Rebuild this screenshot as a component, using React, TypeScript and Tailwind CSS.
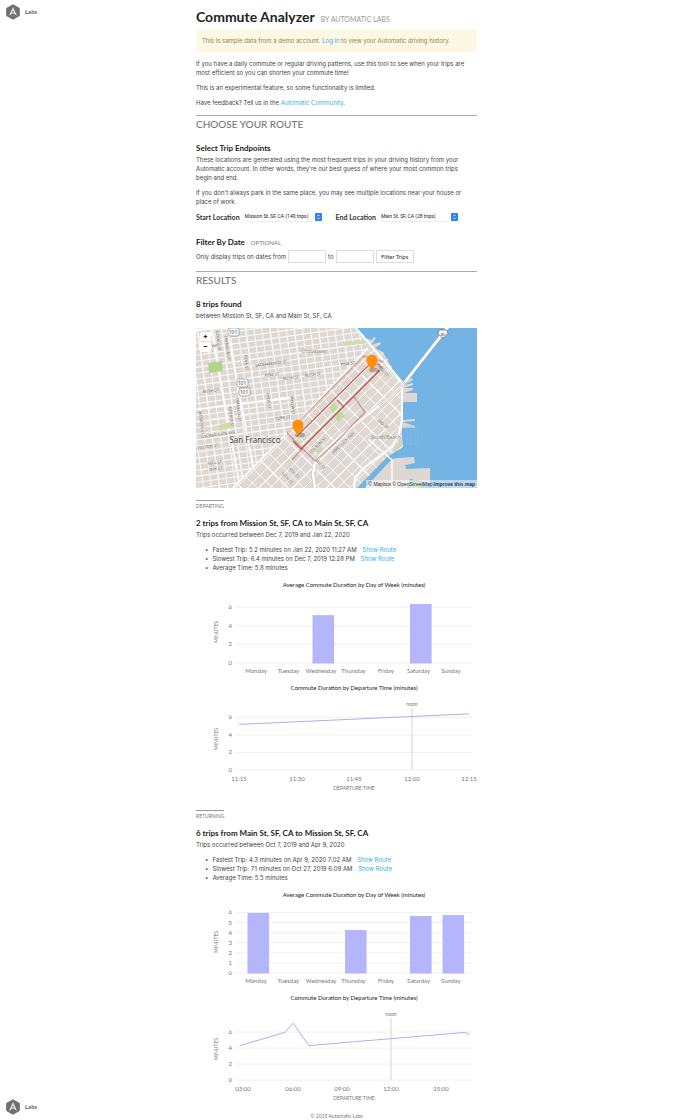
import React from 'react';

const BODY = 'font-[Inter,sans-serif] text-[6px] leading-[9px]';

const BULLET = "before:mr-1 before:content-['•']";

const DAYS = ['Monday', 'Tuesday', 'Wednesday', 'Thursday', 'Friday', 'Saturday', 'Sunday'];

const LabsLogo: React.FC = () => (
  <a href="#" className="flex items-center gap-1 text-[6px] leading-4 font-bold text-[#666]">
    <svg viewBox="0 0 16 16" className="size-4" aria-hidden="true">
      <path d="M8 .8 14.3 4.3V11.7L8 15.2 1.7 11.7V4.3Z" fill="#6f7171" stroke="#6f7171" strokeLinejoin="round" />
      <path d="M8 3 12 11.7 8 9.3 4 11.7Z" fill="#e4e4e4" />
      <path d="M8 6.3 9.2 8.9 8 8.2 6.8 8.9Z" fill="#6f7171" />
    </svg>
    Labs
  </a>
);

interface SectionHeadingProps {
  children: React.ReactNode;
}

const SectionHeading: React.FC<SectionHeadingProps> = ({ children }) => (
  <h2 className="mt-2 border-t border-[#aaa] font-[Lato,sans-serif] text-[10px] leading-[17px] font-medium text-[#777] uppercase">
    {children}
  </h2>
);

interface LocationSelectProps {
  id: string;
  label: string;
  value: string;
}

const LocationSelect: React.FC<LocationSelectProps> = ({ id, label, value }) => (
  <div className="flex items-center gap-1">
    <label htmlFor={id} className="font-[Lato,sans-serif] text-[7px] leading-[10px] font-bold text-[#333]">
      {label}
    </label>
    <div className="relative w-[78px]">
      <select
        id={id}
        className="block h-[10px] w-full appearance-none rounded-sm border-b border-[#eee] bg-white pl-px font-[Roboto,sans-serif] text-[5px] leading-[9px] text-[#222]"
      >
        <option>{value}</option>
      </select>
      <svg viewBox="0 0 7 8" className="pointer-events-none absolute top-px right-0 h-2 w-[7px]" aria-hidden="true">
        <rect width="7" height="8" rx="1" fill="#2f7df0" />
        <path d="M2.2 3.2 3.5 1.8 4.8 3.2M2.2 4.8 3.5 6.2 4.8 4.8" fill="none" stroke="#fff" strokeWidth=".7" />
      </svg>
    </div>
  </div>
);

/* Streets of the map, drawn unrotated and turned as one group */
interface GridProps {
  angle: number;
  stepX: number;
  stepY: number;
}

const range = (from: number, to: number, step: number) =>
  Array.from({ length: Math.floor((to - from) / step) + 1 }, (_, i) => from + i * step);

const StreetGrid: React.FC<GridProps> = ({ angle, stepX, stepY }) => (
  <g transform={`rotate(${angle} 100 100)`} stroke="#fff">
    {range(-80, 300, stepX).map((x, i) => (
      <path key={`v${x}`} d={`M${x} -120V320`} strokeWidth={i % 3 === 0 ? 1.2 : 0.8} />
    ))}
    {range(-100, 300, stepY).map((y, i) => (
      <path key={`h${y}`} d={`M-80 ${y}H320`} strokeWidth={i % 3 === 0 ? 1.1 : 0.8} />
    ))}
  </g>
);

const STREETS: [string, number, number, number][] = [
  ['SACRAMENTO ST', 75, 37, -7],
  ['PINE ST', 76, 48, -5],
  ['BUSH ST', 95, 51, -6],
  ['BUSH ST', 117, 48, -6],
  ['BUSH ST', 15, 64, -8],
  ['PINE ST', 152, 37, -8],
  ['TURK ST', 87, 91, -5],
  ['GOLDEN GATE AVE', 22, 108, -8],
  ['FULTON ST', 12, 120, -8],
  ['FELL ST', 19, 136, -8],
  ['OAK ST', 20, 142, -8],
  ['WAY', 20, 19, -8],
  ['GOUGH ST', 21, 13, 82],
  ['FRANKLIN ST', 30, 20, 82],
  ['POLK ST', 49, 35, 84],
  ['FRANKLIN ST', 41, 82, 84],
  ['GOUGH ST', 34, 89, 84],
  ['HYDE ST', 71, 73, 84],
  ['TAYLOR ST', 95, 77, 84],
  ['WEBSTER ST', 4, 95, 84],
  ['FOLSOM ST', 123, 118, -45],
  ['JAMES LICK FWY', 148, 116, -43],
  ['8TH ST', 123, 137, 45],
  ['9TH ST', 97, 146, 45],
  ['10TH ST', 90, 151, 45],
  ['MAIN ST', 185, 43, 45],
  ['3RD ST', 186, 97, 40],
];

const FREEWAY = 'M252 -1 209 54 197 67 183 78 143 109 124 127 119 135 117 146 119 160';

const TripMap: React.FC = () => (
  <div className="relative mt-2">
    <svg viewBox="0 0 281 160" className="block w-full" role="img" aria-label="Map of trips in San Francisco">
      <defs>
        <clipPath id="north">
          <path d="M0 0H160L172 20 91 105 37 160H0Z" />
        </clipPath>
        <clipPath id="soma">
          <path d="M172 18 187 24 206 54V107L207 119 191 129 161 160H37L91 105Z" />
        </clipPath>
      </defs>
      <rect width="281" height="160" fill="#73b4e4" />
      {/* Land, piers and the far bank of the channel */}
      <path
        d="M0 0H160L169 10 176 12 178 9 180 10 175 17 184 14 185 16 179 20 187 24 197 42 206 54 216 50 217 52 208 57 217 55 217 57 208 60 217 60V62L208 65 221 65V74H206V92L219 91V93L206 94 219 98V100L206 100V107L207 119 191 129 161 160H0Z"
        fill="#dfd8d2"
      />
      <path d="M169 160 196 131 202 130 218 129 219 135 209 137 210 141 234 140V155L214 151 211 160Z" fill="#dfd8d2" />
      <g clipPath="url(#north)">
        <StreetGrid angle={-8} stepX={8} stepY={6} />
        <path d="M-5 2 30 0M30-5 62 165M14-5 45 165M-5 82 95 70" stroke="#fff" strokeWidth="1.8" />
      </g>
      <g clipPath="url(#soma)">
        <StreetGrid angle={-45} stepX={11} stepY={8} />
      </g>
      {/* Parks */}
      <g fill="#b3d58b">
        <path d="M12 35 26 33 27 43 13 45Z" />
        <path d="M22 97 35 94 36 100 23 103Z" fill="#c8dfaa" />
        <path d="M133 79 138 75 142 80 137 85ZM138 88 144 83 149 88 142 94Z" fill="#bfda9c" />
        <path d="M147 14 172 12 173 15 148 18Z" fill="#c9dfae" />
        <path d="M160 0 169 8 167 9 158 0ZM204 112 207 118 197 124ZM119 122 123 117 127 120 122 126Z" fill="#c5ddaa" />
        <path d="M215 153 226 154 224 160H214ZM196 41 200 46 197 47Z" />
      </g>
      <g fill="none" stroke="#fff">
        <path d="M159-1 206 54V92L203 106 196 119 169 139 159 150 158 160" strokeWidth="2" />
        <path d="M37 160 91 105 172 20" strokeWidth="1.6" />
        <path d="M172 111 196 132V160" strokeWidth="1.4" />
      </g>
      {/* Freeway and bridge */}
      <path d={FREEWAY} fill="none" stroke="#bdb7b1" strokeWidth="3.4" />
      <path d={FREEWAY} fill="none" stroke="#fff" strokeWidth="2.6" />
      <path d="M209 54 197 67 183 78" fill="none" stroke="#a5a19d" strokeWidth=".6" />
      {/* South Beach harbor */}
      <path d="M208 99H222V116H208M211 99V116M215 99V116M219 99V116" fill="none" stroke="#8fbbe0" strokeWidth=".6" />

      {/* Recorded routes */}
      <g fill="none" stroke="#b5423a" strokeLinejoin="round">
        <path d="M91 105 168 28 188 34" strokeWidth="1.4" opacity=".35" />
        <path d="M91 105 119 133 143 111 169 84 158 69M106 121 96 132" strokeWidth="1.3" opacity=".45" />
        <path d="M101 108 174 36M141 72 148 79" strokeWidth="1.1" opacity=".75" />
        <path d="M97 113 105 121 186 40" strokeWidth="1.3" opacity=".9" />
        <path d="M182 36 187 41" stroke="#8b2a24" strokeWidth="1.1" />
      </g>

      <g fontFamily="'Noto Sans', sans-serif" textAnchor="middle">
        <g fontSize="4" fill="#555" stroke="#f5f2ef" strokeWidth=".5" paintOrder="stroke">
          {STREETS.map(([name, x, y, angle], i) => (
            <text key={i} x={x} y={y} transform={`rotate(${angle} ${x} ${y})`}>
              {name}
            </text>
          ))}
        </g>
        <text x="118" y="25" fontSize="5" fill="#99918b">Chinatown</text>
        <text x="190" y="111" fontSize="5" fill="#99918b">South Beach</text>
        <text x="59" y="115" fontSize="8" fill="#444" stroke="#f2eeea" strokeWidth="1" paintOrder="stroke">
          San Francisco
        </text>
      </g>

      {/* Highway shields */}
      {[[37, 4], [46, 55], [48, 64]].map(([x, y]) => (
        <g key={y}>
          <rect x={x - 5} y={y - 4} width="11" height="8" rx="2" fill="#fff" stroke="#888" strokeWidth=".7" />
          <text x={x} y={y + 2} fontSize="5" textAnchor="middle" fill="#444" fontFamily="'Noto Sans', sans-serif">
            101
          </text>
        </g>
      ))}
      <path d="M243 2H251L252 6 247 10 242 6Z" fill="#fff" stroke="#666" strokeWidth=".7" />
      <text x="247" y="8" fontSize="4" textAnchor="middle" fill="#444" fontFamily="'Noto Sans', sans-serif">80</text>

      {/* Start and end pins */}
      {[[102, 109], [176, 44]].map(([x, y]) => (
        <g key={x}>
          <ellipse cx={x + 2} cy={y - 2} rx="5" ry="2.5" fill="#000" opacity=".25" />
          <path
            d={`M${x} ${y}C${x - 1} ${y - 5} ${x - 5.5} ${y - 7} ${x - 5.5} ${y - 12}A5.5 5.5 0 0 1 ${x + 5.5} ${y - 12}C${x + 5.5} ${y - 7} ${x + 1} ${y - 5} ${x} ${y}Z`}
            fill="#ff8e08"
          />
        </g>
      ))}
    </svg>

    <div className="absolute top-1 left-1 flex w-[11px] flex-col rounded-xs bg-white text-[7px] leading-[10px] font-bold text-black">
      <button type="button" aria-label="Zoom in" className="h-[10px] border-b border-[#ddd]">+</button>
      <button type="button" aria-label="Zoom out" className="h-[10px]">−</button>
    </div>
    <div className="absolute right-0 bottom-0 flex gap-px bg-white/50 px-[2px] font-['Liberation_Sans',sans-serif] text-[5px] leading-[8px] text-[#333]">
      <a href="#">© Mapbox</a>
      <a href="#">© OpenStreetMap</a>
      <a href="#" className="font-bold">Improve this map</a>
    </div>
  </div>
);

interface AxisProps {
  base: number;
  scale: number;
  ticks: number[];
}

const YAxis: React.FC<AxisProps> = ({ base, scale, ticks }) => {
  const middle = base - 31;
  return (
    <g fill="#777">
      {ticks.map((tick) => (
        <g key={tick}>
          <path d={`M40 ${base - tick * scale}H276`} stroke="#ececec" strokeWidth=".8" />
          <text x="36" y={base - tick * scale + 2} textAnchor="end">{tick}</text>
        </g>
      ))}
      <text x="22" y={middle} fontSize="5" textAnchor="middle" transform={`rotate(-90 22 ${middle})`}>MINUTES</text>
    </g>
  );
};

interface DayChartProps {
  scale: number;
  ticks: number[];
  values: Record<string, number>;
}

const DayChart: React.FC<DayChartProps> = ({ scale, ticks, values }) => (
  <svg viewBox="0 0 281 98" className="mt-[5px] block w-full overflow-visible font-[Lato,sans-serif]" fontSize="6">
    <text x="158" y="9" textAnchor="middle" fill="#222">Average Commute Duration by Day of Week (minutes)</text>
    <YAxis base={85} scale={scale} ticks={ticks} />
    {DAYS.map((day, i) => {
      const height = (values[day] ?? 0) * scale;
      return (
        <g key={day}>
          {height > 0 && <rect x={51.5 + i * 32.5} y={85.5 - height} width="21.6" height={height} fill="#b5b5fb" />}
          <text x={60 + i * 32.5} y="95" textAnchor="middle" fill="#777">{day}</text>
        </g>
      );
    })}
  </svg>
);

interface TimeChartProps {
  scale: number;
  noon: number;
  times: [string, number][];
  points: [number, number][];
}

const TimeChart: React.FC<TimeChartProps> = ({ scale, noon, times, points }) => (
  <svg viewBox="0 0 281 116" className="mt-1 block w-full overflow-visible font-[Lato,sans-serif]" fontSize="6">
    <text x="158" y="10" textAnchor="middle" fill="#222">Commute Duration by Departure Time (minutes)</text>
    <YAxis base={90} scale={scale} ticks={[0, 2, 4, 6]} />
    <path d={`M${noon} 28V90`} stroke="#ccc" strokeWidth=".8" />
    <text x={noon} y="26" fontSize="5" textAnchor="middle" fill="#777">noon</text>
    <polyline
      points={points.map(([x, minutes]) => `${x},${90 - minutes * scale}`).join(' ')}
      fill="none"
      stroke="#aeaeee"
    />
    {times.map(([time, x]) => (
      <text key={time} x={x} y="101" textAnchor="middle" fill="#777">{time}</text>
    ))}
    <text x="158" y="110" fontSize="5" textAnchor="middle" fill="#777">DEPARTURE TIME</text>
  </svg>
);

interface TripSectionProps {
  direction: string;
  title: string;
  period: string;
  fastest: string;
  slowest: string;
  average: string;
  children: React.ReactNode;
}

const TripSection: React.FC<TripSectionProps> = ({ direction, title, period, fastest, slowest, average, children }) => (
  <section>
    <div className="flex">
      <span className="w-7 border-t border-[#999] pt-px font-[Lato,sans-serif] text-[5px] leading-[8px] text-[#777] uppercase">{direction}</span>
    </div>
    <h3 className="mt-2 font-[Lato,sans-serif] text-[8px] leading-[10px] font-bold text-[#222]">{title}</h3>
    <p className="mt-[2px]">{period}</p>
    <ul className="mt-[6px] mb-[6px] pl-[9px]">
      <li className={BULLET}>
        Fastest Trip: {fastest} <a href="#" className="ml-1 text-[#38b0de]">Show Route</a>
      </li>
      <li className={BULLET}>
        Slowest Trip: {slowest} <a href="#" className="ml-1 text-[#38b0de]">Show Route</a>
      </li>
      <li className={BULLET}>Average Time: {average}</li>
    </ul>
    {children}
  </section>
);

const App: React.FC = () => {
  return (
    <div className="grid grid-cols-[1fr_minmax(0,281px)_1fr] bg-white font-[Lato,sans-serif] text-[#444]">
      {/* Brand links */}
      <div className="flex flex-col items-start justify-between px-[5px] pt-1 pb-[5px]">
        <LabsLogo />
        <LabsLogo />
      </div>

      <main className={`${BODY} pt-2`}>
        <header className="flex items-baseline gap-[6px] font-[Lato,sans-serif]">
          <h1 className="text-[14px] leading-[18px] font-bold text-[#222]">Commute Analyzer</h1>
          <span className="text-[7px] text-[#999] uppercase">by Automatic Labs</span>
        </header>

        <div className="mt-[3px] bg-[#fcf8e3] px-[6px] py-[7px] text-[#93805a]">
          This is sample data from a demo account. <a href="#" className="text-[#38b0de]">Log in</a> to view your
          Automatic driving history.
        </div>

        <p className="mt-[7px] pr-1">
          If you have a daily commute or regular driving patterns, use this tool to see when your trips are most
          efficient so you can shorten your commute time!
        </p>
        <p className="mt-[6px] pr-1">This is an experimental feature, so some functionality is limited.</p>
        <p className="mt-[6px] pr-1">
          Have feedback? Tell us in the <a href="#" className="text-[#38b0de]">Automatic Community</a>.
        </p>

        <SectionHeading>Choose your route</SectionHeading>
        <h3 className="mt-[10px] font-[Lato,sans-serif] text-[8px] leading-[10px] font-bold text-[#222]">
          Select Trip Endpoints
        </h3>
        <p className="mt-[2px] pr-1">
          These locations are generated using the most frequent trips in your driving history from your Automatic
          account. In other words, they're our best guess of where your most common trips begin and end.
        </p>
        <p className="mt-[6px] pr-1">
          If you don't always park in the same place, you may see multiple locations near your house or place of work.
        </p>

        <form>
          <div className="mt-[6px] flex gap-[14px]">
            <LocationSelect id="start" label="Start Location" value="Mission St, SF, CA (140 trips)" />
            <LocationSelect id="end" label="End Location" value="Main St, SF, CA (28 trips)" />
          </div>
          <h3 className="mt-[15px] font-[Lato,sans-serif] text-[8px] leading-[10px] font-bold text-[#222]">
            Filter By Date <span className="ml-1 text-[6px] font-normal text-[#777] uppercase">optional</span>
          </h3>
          <div className="mt-[2px] flex items-center gap-[2px]">
            <label htmlFor="from">Only display trips on dates from</label>
            <input id="from" type="text" className="h-[13px] w-[38px] border border-[#ddd] px-[2px]" />
            <label htmlFor="to">to</label>
            <input id="to" type="text" className="h-[13px] w-[38px] border border-[#ddd] px-[2px]" />
            <button type="button" className="h-[13px] w-[38px] border border-[#ddd] font-[Lato,sans-serif] text-[6px] leading-[9px] text-[#333]">
              Filter Trips
            </button>
          </div>
        </form>

        <SectionHeading>Results</SectionHeading>
        <h3 className="mt-[10px] font-[Lato,sans-serif] text-[8px] leading-[10px] font-bold text-[#222]">
          8 trips found
        </h3>
        <p className="mt-[2px]">between Mission St, SF, CA and Main St, SF, CA</p>
        <TripMap />

        <div className="mt-3 flex flex-col gap-[14px]">
          <TripSection
            direction="Departing"
            title="2 trips from Mission St, SF, CA to Main St, SF, CA"
            period="Trips occurred between Dec 7, 2019 and Jan 22, 2020"
            fastest="5.2 minutes on Jan 22, 2020 11:27 AM"
            slowest="6.4 minutes on Dec 7, 2019 12:28 PM"
            average="5.8 minutes"
          >
            <DayChart scale={9.3} ticks={[0, 2, 4, 6]} values={{ Wednesday: 5.2, Saturday: 6.4 }} />
            <TimeChart
              scale={8.77}
              noon={216}
              times={[['11:15', 43], ['11:30', 101], ['11:45', 158], ['12:00', 216], ['12:15', 273]]}
              points={[[43, 5.2], [273, 6.4]]}
            />
          </TripSection>

          <TripSection
            direction="Returning"
            title="6 trips from Main St, SF, CA to Mission St, SF, CA"
            period="Trips occurred between Oct 7, 2019 and Apr 9, 2020"
            fastest="4.3 minutes on Apr 9, 2020 7:02 AM"
            slowest="7.1 minutes on Oct 27, 2019 6:09 AM"
            average="5.5 minutes"
          >
            <DayChart
              scale={10.1}
              ticks={[0, 1, 2, 3, 4, 5, 6]}
              values={{ Monday: 6, Thursday: 4.3, Saturday: 5.7, Sunday: 5.8 }}
            />
            <TimeChart
              scale={8}
              noon={195}
              times={[['03:00', 47], ['06:00', 97], ['09:00', 146], ['12:00', 195], ['15:00', 245]]}
              points={[[44, 4.3], [89, 5.95], [97, 7.1], [113, 4.3], [269, 5.95], [273, 5.7]]}
            />
          </TripSection>
        </div>

        <footer className="mt-[6px] text-center font-[Lato,sans-serif] text-[5px] leading-[8px] text-[#777]">
          © 2015 Automatic Labs
        </footer>
      </main>
    </div>
  );
};

export default App;
